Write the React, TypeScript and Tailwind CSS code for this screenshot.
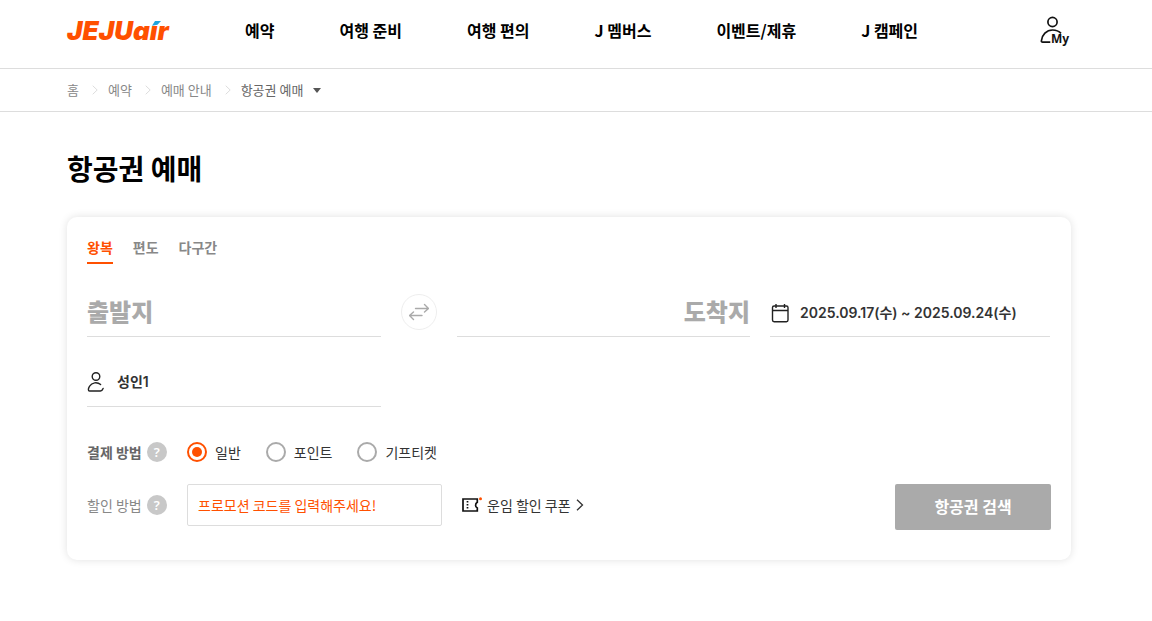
import { useState } from "react";

const NAV_ITEMS = ["예약", "여행 준비", "여행 편의", "J 멤버스", "이벤트/제휴", "J 캠페인"];
const TRIP_TYPES = ["왕복", "편도", "다구간"];
const PAYMENTS = ["일반", "포인트", "기프티켓"];

function Logo() {
  return (
    <svg width="102" height="24" viewBox="0 0 102 24" role="img" aria-label="JEJUair" className="block overflow-visible">
      <text x="0" y="20" fill="#ff5000" fontSize="26" fontWeight="900" fontStyle="italic" className="font-['Inter',sans-serif]">
        JEJUair
      </text>
      <path d="M84 -1h12v6h-12z" fill="#fff" />
      <path d="M88 1h6l-3.500 3.800-5.500.9z" fill="#1ba4de" />
    </svg>
  );
}

function MyIcon() {
  return (
    <svg width="32" height="30" viewBox="0 0 32 30" fill="none" stroke="#111" strokeWidth="1.700" className="block" aria-hidden="true">
      <circle cx="12.500" cy="6" r="4.600" />
      <path d="M10.300 26.100H2.600c-.9 0-1.300-.5-1.200-1.300C1.900 18.800 6.500 14 12.600 14c3.400 0 6.300 1.100 8.400 3.400" />
      <text x="11" y="27" fill="#111" stroke="none" fontSize="12" fontWeight="700" className="font-['Noto_Sans',sans-serif]">
        My
      </text>
    </svg>
  );
}

function CrumbArrow() {
  return (
    <svg width="6" height="10" viewBox="0 0 6 10" fill="none" stroke="#ddd" aria-hidden="true">
      <path d="M.7.700 5.200 5 .7 9.300" />
    </svg>
  );
}

function SwapIcon() {
  return (
    <svg width="20" height="18" viewBox="0 0 20 18" fill="none" stroke="#aaa" strokeWidth="1.400" strokeLinecap="round" strokeLinejoin="round" aria-hidden="true">
      <path d="M6.500 5.500H19M15.500 1.500l4 4-4 3.500M13 12.500H1M4.500 9l-4 3.500 4 4" />
    </svg>
  );
}

function CalendarIcon() {
  return (
    <svg width="20" height="20" viewBox="0 0 20 20" fill="none" stroke="#222" strokeWidth="1.400" aria-hidden="true">
      <rect x="2.500" y="3" width="15.500" height="15.700" rx="1.600" />
      <path d="M2.500 7.500H18M6 .9v4M14.500.9v4" />
    </svg>
  );
}

function PersonIcon() {
  return (
    <svg width="18" height="20" viewBox="0 0 18 20" fill="none" stroke="#222" strokeWidth="1.400" strokeLinecap="round" aria-hidden="true">
      <circle cx="9" cy="4.500" r="3.800" />
      <path d="M13.600 12.600c-3.400-3-8.700-2.200-11 1.500-.8 1.200-1.200 2.500-1.200 3.700 0 .8.400 1.200 1.200 1.200h10.800c1.200 0 2-.6 2.700-2.500" />
    </svg>
  );
}

function CouponIcon() {
  return (
    <svg width="20" height="16" viewBox="0 0 20 16" fill="none" stroke="#111" strokeWidth="1.700" aria-hidden="true">
      <path d="M1 2h14.300v3.200c-2.300 1.300-2.300 4.600 0 5.900V14H1z" />
      <path d="M5.500 4v9" strokeDasharray="1.500 1.500" />
      <circle cx="18.500" cy="1.700" r="1.500" fill="#ff5000" stroke="none" />
    </svg>
  );
}

function HelpButton({ label }: { label: string }) {
  return (
    <button
      type="button"
      aria-label={label}
      className="flex size-5 items-center justify-center rounded-full bg-[#c8c8c8] font-['Noto_Sans',sans-serif] text-[13px] leading-5 font-semibold text-white"
    >
      ?
    </button>
  );
}

export default function App() {
  const [trip, setTrip] = useState("왕복");
  const [payment, setPayment] = useState("일반");

  return (
    <div className="min-h-screen bg-white font-['Noto_Sans_CJK_KR',sans-serif] text-sm text-[#333]">
      <header className="flex h-[69px] items-start border-b border-[#ddd] pr-20 pl-[67px]">
        <a href="#home" className="mt-5">
          <Logo />
        </a>
        <nav className="mt-[18px] ml-[76px] flex gap-[65px] text-base leading-6 font-bold whitespace-nowrap text-black">
          {NAV_ITEMS.map((item) => (
            <a key={item} href="#menu">
              {item}
            </a>
          ))}
        </nav>
        <a href="#my" aria-label="My" className="mt-4 ml-auto">
          <MyIcon />
        </a>
      </header>

      <nav aria-label="breadcrumb" className="flex h-[43px] items-center gap-2.5 border-b border-[#ddd] pl-[67px] text-[13px] text-[#888]">
        <a href="#home" className="mr-[3px]">홈</a>
        <CrumbArrow />
        <a href="#reserve" className="mr-[3px]">예약</a>
        <CrumbArrow />
        <a href="#guide" className="mr-[3px]">예매 안내</a>
        <CrumbArrow />
        <button type="button" className="flex items-center gap-2.5 text-[#666]">
          항공권 예매
          <svg width="8" height="5" viewBox="0 0 8 5" fill="#555" aria-hidden="true">
            <path d="M0 0h8L4 5z" />
          </svg>
        </button>
      </nav>

      <main className="pt-[35px] pr-[81px] pb-[61px] pl-[67px]">
        <h1 className="text-[28px] leading-[42px] font-bold text-black">항공권 예매</h1>

        <form className="mt-7 rounded-[10px] px-5 pt-5 pb-[30px] shadow-[0_0_8px_rgba(0,0,0,0.12)]">
          <div role="tablist" className="flex gap-5 font-bold">
            {TRIP_TYPES.map((type) => (
              <button
                key={type}
                type="button"
                role="tab"
                aria-selected={trip === type}
                onClick={() => setTrip(type)}
                className={
                  trip === type
                    ? "h-[27px] border-b-2 border-[#ff5000] pb-1.5 leading-5 text-[#ff5000]"
                    : "h-[27px] border-b-2 border-transparent pb-1.5 leading-5 text-[#888]"
                }
              >
                {type}
              </button>
            ))}
          </div>

          <div className="mt-[23px] flex gap-5 pr-px">
            <button type="button" className="h-[50px] flex-1 border-b border-[#ddd] pb-0.5 text-left text-2xl font-black text-[#aaa]">
              출발지
            </button>
            <button type="button" aria-label="출발지와 도착지 교환" className="mt-[7px] flex size-9 items-center justify-center rounded-full border border-[#eee]">
              <SwapIcon />
            </button>
            <button type="button" className="h-[50px] flex-1 border-b border-[#ddd] pb-0.5 text-right text-2xl font-black text-[#aaa]">
              도착지
            </button>
            <button
              type="button"
              className="flex h-[50px] w-[280px] items-center gap-2.5 border-b border-[#ddd] pt-0.5 font-['Inter','Noto_Sans_CJK_KR',sans-serif] font-semibold whitespace-nowrap"
            >
              <CalendarIcon />
              2025.09.17(수) ~ 2025.09.24(수)
            </button>
          </div>

          <div className="mt-5 grid grid-cols-[1fr_1fr_376px]">
            <button
              type="button"
              className="flex h-[50px] items-center gap-3 border-b border-[#ddd] font-['Inter','Noto_Sans_CJK_KR',sans-serif] font-semibold"
            >
              <PersonIcon />
              성인1
            </button>
          </div>

          <div role="radiogroup" aria-labelledby="payment-label" className="mt-[34px] flex h-[22px] items-center">
            <div className="flex w-[100px] items-center gap-[5px]">
              <span id="payment-label" className="font-bold text-[#666]">결제 방법</span>
              <HelpButton label="결제 방법 도움말" />
            </div>
            <div className="flex gap-[25px]">
              {PAYMENTS.map((name) => (
                <label key={name} className="flex items-center gap-2">
                  <input
                    type="radio"
                    name="payment"
                    value={name}
                    checked={payment === name}
                    onChange={() => setPayment(name)}
                    className="size-5 appearance-none rounded-full border-2 border-[#aaa] bg-white checked:border-[#ff5000] checked:bg-[#ff5000] checked:bg-clip-content checked:p-[3px]"
                  />
                  {name}
                </label>
              ))}
            </div>
          </div>

          <div className="mt-[21px] flex items-start">
            <div className="flex h-[42px] w-[100px] items-center gap-[5px]">
              <label htmlFor="promo" className="text-[#888]">할인 방법</label>
              <HelpButton label="할인 방법 도움말" />
            </div>
            <input
              id="promo"
              type="text"
              placeholder="프로모션 코드를 입력해주세요!"
              className="h-[42px] w-[255px] rounded-xs border border-[#ddd] px-2.5 placeholder:text-[#ff5000]"
            />
            <a href="#coupon" className="ml-5 flex h-[42px] items-center gap-[5px]">
              <CouponIcon />
              운임 할인 쿠폰
              <svg width="8" height="12" viewBox="0 0 8 12" fill="none" stroke="#333" strokeWidth="1.300" aria-hidden="true">
                <path d="m1 .7 5.500 5.300L1 11.300" />
              </svg>
            </a>
            <button type="submit" className="ml-auto h-[46px] w-[156px] rounded-xs bg-[#aaa] pb-0.5 text-base font-bold text-white">
              항공권 검색
            </button>
          </div>
        </form>
      </main>
    </div>
  );
}
